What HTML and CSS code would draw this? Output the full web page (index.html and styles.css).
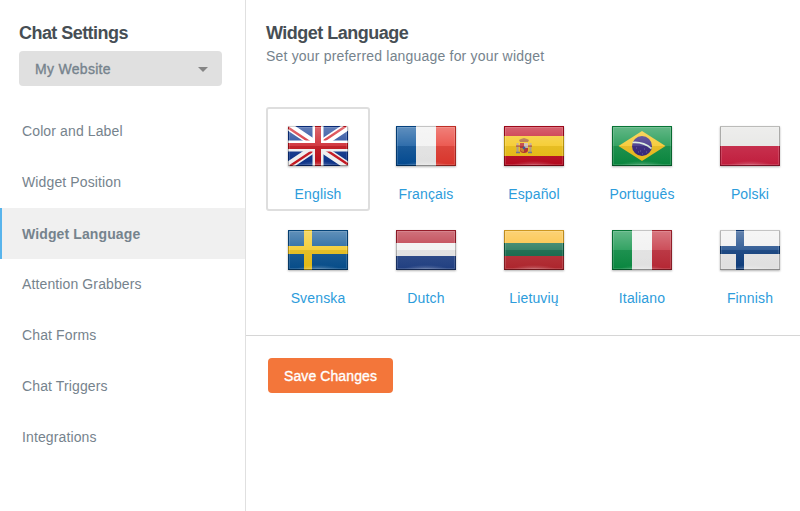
FILE: index.html
```html
<!DOCTYPE html>
<html lang="en">
<head>
<meta charset="utf-8">
<title>Chat Settings</title>
<link rel="stylesheet" href="styles.css">
</head>
<body>
<svg class="defs" width="0" height="0" aria-hidden="true">
  <defs>
    <linearGradient id="sheen" x1="0" y1="0" x2="0" y2="1">
      <stop offset="0" stop-color="#fff" stop-opacity=".36"/>
      <stop offset=".5" stop-color="#fff" stop-opacity=".17"/>
      <stop offset=".5" stop-color="#fff" stop-opacity=".09"/>
      <stop offset="1" stop-color="#fff" stop-opacity="0"/>
    </linearGradient>
    <linearGradient id="shade" x1="0" y1="0" x2="0" y2="1">
      <stop offset="0" stop-color="#000" stop-opacity=".06"/>
      <stop offset="1" stop-color="#000" stop-opacity=".07"/>
    </linearGradient>
    <radialGradient id="glow" cx=".5" cy="1" r=".5">
      <stop offset="0" stop-color="#fff" stop-opacity=".25"/>
      <stop offset="1" stop-color="#fff" stop-opacity="0"/>
    </radialGradient>
    <symbol id="gloss" viewBox="0 0 60 40">
      <rect x="1" y="1" width="58" height="38" fill="url(#sheen)"/>
      <rect y="20" width="60" height="20" fill="url(#shade)"/>
      <rect x="8" y="31" width="44" height="8" fill="url(#glow)"/>
      <rect x="1.5" y="1.5" width="57" height="37" fill="none" stroke="#fff" stroke-opacity=".14"/>
      <path d="M0 0h60v1H0z" fill-opacity=".18"/>
      <path d="M0 1h1v38H0zM59 1h1v38h-1z" fill-opacity=".25"/>
      <path d="M0 39h60v1H0z" fill-opacity=".38"/>
    </symbol>
  </defs>
</svg>
<div class="app">
  <aside class="sidebar">
    <h1 class="title">Chat Settings</h1>
    <div class="select"><span>My Website</span><svg width="10" height="5" viewBox="0 0 10 5"><path d="M0 0h10L5 5z" fill="#858585"/></svg></div>
    <nav class="nav">
      <a class="nav-item">Color and Label</a>
      <a class="nav-item">Widget Position</a>
      <a class="nav-item active">Widget Language</a>
      <a class="nav-item">Attention Grabbers</a>
      <a class="nav-item">Chat Forms</a>
      <a class="nav-item">Chat Triggers</a>
      <a class="nav-item">Integrations</a>
    </nav>
  </aside>
  <main class="main">
    <section class="panel">
      <h2 class="title title-main">Widget Language</h2>
      <p class="subtitle">Set your preferred language for your widget</p>
      <div class="languages">
        <a class="lang selected"><svg class="flag" viewBox="0 0 60 40">
          <path fill="#0a3490" d="M0 0h60v40H0z"/>
          <path d="M0 0l60 40M60 0L0 40" stroke="#fff" stroke-width="8"/>
          <path d="M0 1.5L27 19.5M60 38.5L33 20.5M58 0L31 18M2 40L29 22" stroke="#d0141e" stroke-width="2.4"/>
          <path d="M30 0v40M0 20h60" stroke="#fff" stroke-width="11"/>
          <path d="M30 0v40M0 20h60" stroke="#c8101a" stroke-width="6"/>
          <use href="#gloss"/></svg>English</a>
        <a class="lang"><svg class="flag" viewBox="0 0 60 40">
          <path fill="#05509a" d="M0 0h20v40H0z"/><path fill="#f0f0f0" d="M20 0h20v40H20z"/><path fill="#e8392f" d="M40 0h20v40H40z"/>
          <use href="#gloss"/></svg>Français</a>
        <a class="lang"><svg class="flag" viewBox="0 0 60 40">
          <path fill="#c00a20" d="M0 0h60v40H0z"/><path fill="#f4c410" d="M0 10h60v20H0z"/>
          <path d="M13.5 17v10M26.500 17v10" stroke="#b5a08a" stroke-width="2"/>
          <path d="M12 20h4M24 20h4" stroke="#b34c32" stroke-width="1.500"/>
          <path d="M12 26.500h4M24 26.500h4" stroke="#75758a" stroke-width="1.500"/>
          <path d="M16 17h8v7q0 3-4 3t-4-3z" fill="#b92b2b"/>
          <path d="M20 17h4v5h-4z" fill="#c9b6ad"/><path d="M16 22h4v4q-4 0-4-4z" fill="#d68322"/>
          <circle cx="20" cy="22" r="1.400" fill="#315795"/>
          <path d="M16 16l-1-2 2-1 3-1 3 1 2 1-1 2z" fill="#a9602c"/>
          <use href="#gloss"/></svg>Español</a>
        <a class="lang"><svg class="flag" viewBox="0 0 60 40">
          <path fill="#0a8f42" d="M0 0h60v40H0z"/><path fill="#f5c218" d="M30 5l23.500 15L30 35 6.500 20z"/>
          <circle cx="30" cy="20" r="10" fill="#30207c"/>
          <path d="M20.500 16.500Q31 15.500 39.500 22.500" fill="none" stroke="#d5eadb" stroke-width="1.700"/>
          <path d="M24 22h1M28 25h1M32 23h1M34 26h1M30 28h1M26 26h1" stroke="#6b60a5"/>
          <use href="#gloss"/></svg>Português</a>
        <a class="lang"><svg class="flag" viewBox="0 0 60 40">
          <path fill="#e4e4e2" d="M0 0h60v20H0z"/><path fill="#cf2042" d="M0 20h60v20H0z"/>
          <use href="#gloss"/></svg>Polski</a>
        <a class="lang"><svg class="flag" viewBox="0 0 60 40">
          <path fill="#075293" d="M0 0h60v40H0z"/><path fill="#f2c515" d="M16 0h8v16h36v8H24v16h-8V24H0v-8h16z"/>
          <use href="#gloss"/></svg>Svenska</a>
        <a class="lang"><svg class="flag" viewBox="0 0 60 40">
          <path fill="#b52232" d="M0 0h60v13H0z"/><path fill="#f0f0f0" d="M0 13h60v13H0z"/><path fill="#23448a" d="M0 26h60v14H0z"/>
          <use href="#gloss"/></svg>Dutch</a>
        <a class="lang"><svg class="flag" viewBox="0 0 60 40">
          <path fill="#fbb928" d="M0 0h60v13H0z"/><path fill="#106a4a" d="M0 13h60v13H0z"/><path fill="#ba2830" d="M0 26h60v14H0z"/>
          <use href="#gloss"/></svg>Lietuvių</a>
        <a class="lang"><svg class="flag" viewBox="0 0 60 40">
          <path fill="#0a9044" d="M0 0h20v40H0z"/><path fill="#f0f0f0" d="M20 0h20v40H20z"/><path fill="#c22a38" d="M40 0h20v40H40z"/>
          <use href="#gloss"/></svg>Italiano</a>
        <a class="lang"><svg class="flag" viewBox="0 0 60 40">
          <path fill="#f0f0f0" d="M0 0h60v40H0z"/><path fill="#0d3f82" d="M16 0h8v16h36v8H24v16h-8V24H0v-8h16z"/>
          <use href="#gloss"/></svg>Finnish</a>
      </div>
    </section>
    <footer class="actions"><button class="save">Save Changes</button></footer>
  </main>
</div>
</body>
</html>
```
FILE: styles.css
```css
* { box-sizing: border-box; }
body {
  margin: 0;
  overflow: hidden;
  background: #fff;
  color: #76838d;
  font: 14px/20px "Liberation Sans", Arial, sans-serif;
}
.defs { position: absolute; }
.app { display: flex; height: 511px; }
.sidebar {
  flex: 0 0 246px;
  padding-top: 23px;
  border-right: 1px solid #e0e0e0;
}
.title {
  margin: 0 0 8px 19px;
  color: #464e54;
  font-size: 18px;
  line-height: 20px;
  letter-spacing: -0.55px;
}
.select {
  display: flex;
  align-items: center;
  justify-content: space-between;
  width: 203px;
  height: 35px;
  margin-left: 19px;
  padding: 1px 14px 0 16px;
  border-radius: 4px;
  background: #e0e0e0;
  -webkit-text-stroke: 0.35px;
  letter-spacing: 0.3px;
}
.nav { display: flex; flex-direction: column; margin-top: 20px; }
.nav-item {
  height: 51px;
  padding: 15px 0 0 22px;
  letter-spacing: 0.12px;
}
.nav-item.active {
  padding: 16px 0 0 20px;
  border-left: 2px solid #58b4ec;
  background: #f0f0f0;
  font-weight: bold;
}
.main { flex: 1; min-width: 0; }
.panel {
  height: 336px;
  padding: 23px 0 0 20px;
  border-bottom: 1px solid #d6d6d6;
}
.title-main { margin: 0 0 3px; letter-spacing: -0.5px; }
.subtitle { margin: 0 0 41px; letter-spacing: 0.19px; }
.languages {
  display: grid;
  grid-template-columns: repeat(5, 104px);
  grid-auto-rows: 104px;
  column-gap: 4px;
}
.lang {
  display: flex;
  flex-direction: column;
  align-items: center;
  gap: 18px;
  padding-top: 17px;
  border: 2px solid transparent;
  border-radius: 3px;
  color: #2d9cdb;
  letter-spacing: 0.15px;
}
.lang.selected { border-color: #dedede; }
.flag {
  display: block;
  flex: none;
  width: 60px;
  height: 40px;
  box-shadow: 0 1px 2px rgba(0, 0, 0, 0.3);
}
.actions { padding: 22px; }
.save {
  display: block;
  width: 125px;
  height: 35px;
  padding: 1px 0 0;
  border: 0;
  border-radius: 4px;
  background: #f3763a;
  color: #fff;
  font: inherit;
  letter-spacing: 0.1px;
  -webkit-text-stroke: 0.35px;
}
```
